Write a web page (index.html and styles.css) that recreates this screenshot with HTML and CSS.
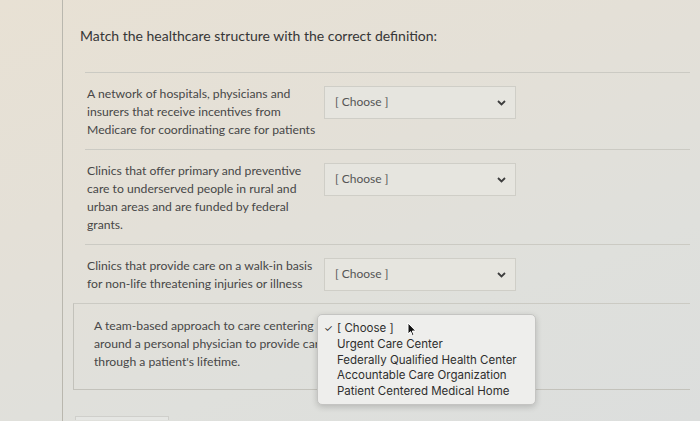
FILE: index.html
```html
<!DOCTYPE html>
<html>
<head>
<meta charset="utf-8">
<link rel="stylesheet" href="styles.css">
</head>
<body>
<div class="page">
  <div class="panel">
    <h1 class="title">Match the healthcare structure with the correct definition:</h1>
    <div class="questions">
      <div class="row">
        <div class="prompt">A network of hospitals, physicians and insurers that receive incentives from Medicare for coordinating care for patients</div>
        <div class="select-wrap">
          <div class="select"><span>[ Choose ]</span><svg class="chev" width="9" height="6" viewBox="0 0 9 6"><polyline points="1,1 4.5,4.5 8,1" fill="none" stroke="#3d3d3d" stroke-width="1.8"/></svg></div>
        </div>
      </div>
      <div class="row">
        <div class="prompt">Clinics that offer primary and preventive care to underserved people in rural and urban areas and are funded by federal grants.</div>
        <div class="select-wrap">
          <div class="select"><span>[ Choose ]</span><svg class="chev" width="9" height="6" viewBox="0 0 9 6"><polyline points="1,1 4.5,4.5 8,1" fill="none" stroke="#3d3d3d" stroke-width="1.8"/></svg></div>
        </div>
      </div>
      <div class="row">
        <div class="prompt">Clinics that provide care on a walk-in basis for non-life threatening injuries or illness</div>
        <div class="select-wrap">
          <div class="select"><span>[ Choose ]</span><svg class="chev" width="9" height="6" viewBox="0 0 9 6"><polyline points="1,1 4.5,4.5 8,1" fill="none" stroke="#3d3d3d" stroke-width="1.8"/></svg></div>
        </div>
      </div>
      <div class="row row-open">
        <div class="prompt"><span class="line">A team-based approach to care centering</span><span class="line">around a personal physician to provide care</span><span class="line">through a patient's lifetime.</span></div>
        <div class="select-wrap">
          <div class="select select-hidden"></div>
          <ul class="menu">
            <li class="checked">[ Choose ]</li>
            <li>Urgent Care Center</li>
            <li>Federally Qualified Health Center</li>
            <li>Accountable Care Organization</li>
            <li>Patient Centered Medical Home</li>
          </ul>
          <svg class="cursor" width="10" height="15" viewBox="0 0 10 15"><path d="M1,1 L1,12 L3.6,9.6 L5.4,13.8 L7,13.1 L5.3,9 L8.8,9 Z" fill="#111" stroke="#fff" stroke-width="1"/></svg>
        </div>
      </div>
    </div>
    <div class="next-btn"></div>
  </div>
</div>
</body>
</html>
```
FILE: styles.css
```css
html, body {
  margin: 0;
  padding: 0;
  height: 100%;
  overflow: hidden;
}
body {
  background: linear-gradient(160deg, #e8e1d4 0%, #e4e0d7 35%, #dfe0dc 70%, #dcdedd 100%);
  font-family: Lato, "Liberation Sans", sans-serif;
  color: #3f3f3f;
}
.page {
  height: 421px;
  padding-left: 62px;
}
.panel {
  height: 100%;
  border-left: 1px solid #b9b7ae;
  padding: 26px 0 0 17px;
  box-sizing: border-box;
}
.title {
  margin: 0;
  font-size: 14px;
  font-weight: 400;
  line-height: 20px;
  color: #363636;
}
.questions {
  margin: 26px 0 0 5px;
  width: 605px;
}
.row {
  display: flex;
  align-items: flex-start;
  gap: 4px;
  border-top: 1px solid #cbcac3;
  padding: 12px 0 10px 0;
}
.prompt {
  width: 233px;
  padding-left: 2px;
  font-size: 12.2px;
  line-height: 18px;
  color: #474747;
}
.select-wrap {
  position: relative;
  margin-top: 1px;
}
.select {
  width: 192px;
  height: 33px;
  border: 1px solid #cfcec7;
  background: #e6e5df;
  display: flex;
  align-items: center;
  justify-content: space-between;
  padding: 0 9px 0 10px;
  box-sizing: border-box;
  font-size: 12px;
  color: #555;
}
.select span { padding-bottom: 2px; }
.row-open {
  margin-left: -12px;
  padding-left: 12px;
  padding-top: 13px;
  padding-bottom: 18px;
  border-left: 1px solid #c3c2bb;
  border-bottom: 1px solid #c3c2bb;
}
.row-open .prompt {
  padding-left: 8px;
  width: 227px;
}
.line {
  display: block;
  white-space: nowrap;
}
.menu {
  position: absolute;
  z-index: 2;
  left: -8px;
  top: -4px;
  width: 217px;
  margin: 0;
  padding: 6px 0 4px 0;
  list-style: none;
  background: #eeeeec;
  border: 1px solid #c4c4c2;
  border-radius: 5px;
  box-shadow: 0 2px 6px rgba(0, 0, 0, 0.18);
  font-family: Inter, "Noto Sans", sans-serif;
  font-size: 11.5px;
  line-height: 15.8px;
  color: #2e2e2e;
}
.menu li {
  position: relative;
  padding-left: 19px;
}
.menu li.checked::before {
  content: "\2713";
  position: absolute;
  left: 6px;
  font-size: 10px;
}
.cursor {
  position: absolute;
  z-index: 3;
  left: 82px;
  top: 4px;
}
.next-btn {
  width: 92px;
  height: 3px;
  margin: 26px 0 0 -5px;
  border: 1px solid #cfcfcb;
  border-bottom: none;
  background: #e5e6e3;
}
```
